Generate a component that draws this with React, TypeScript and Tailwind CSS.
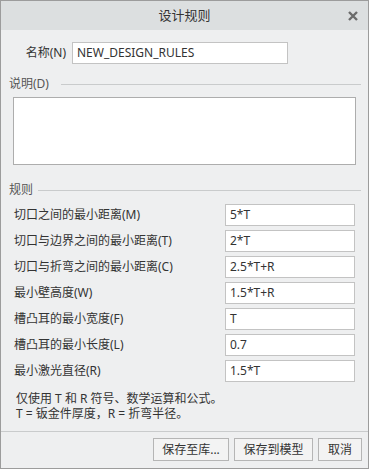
import React from 'react';

const rules = [
  { label: '切口之间的最小距离(M)', value: '5*T' },
  { label: '切口与边界之间的最小距离(T)', value: '2*T' },
  { label: '切口与折弯之间的最小距离(C)', value: '2.5*T+R' },
  { label: '最小壁高度(W)', value: '1.5*T+R' },
  { label: '槽凸耳的最小宽度(F)', value: 'T' },
  { label: '槽凸耳的最小长度(L)', value: '0.7' },
  { label: '最小激光直径(R)', value: '1.5*T' },
];

function Section({ title, lineStart }: { title: string; lineStart: string }) {
  return (
    <div className="flex items-center h-[14px] pl-[8px] pr-[7px] text-[#555]">
      <span className="leading-[14px]">{title}</span>
      <div className={`flex-1 h-px bg-[#c9cbcc] ${lineStart}`} />
    </div>
  );
}

export default function App() {
  return (
    <div className="w-[369px] h-[469px] border border-[#9c9c9c] bg-[#eeeff0] flex flex-col text-[12px] text-[#333] font-['Noto_Sans','Noto_Sans_CJK_SC',sans-serif]">
      <div className="relative h-[29px] bg-[#dcdfe0] flex items-center justify-center text-[13px] text-[#333]">
        <span>设计规则</span>
        <svg className="absolute right-[10px] top-[10px]" width="10" height="10" viewBox="0 0 10 10">
          <path d="M1 1L9 9M9 1L1 9" stroke="#6b6b6b" strokeWidth="2.4" />
        </svg>
      </div>

      <div className="flex items-center mt-[12px] pl-[19px]">
        <span className="w-[46px] text-right">名称(N)</span>
        <div className="ml-[6px] w-[216px] h-[22px] bg-white border border-[#c3c3c3] flex items-center pl-[4px]">
          NEW_DESIGN_RULES
        </div>
      </div>

      <div className="mt-[13px]">
        <Section title="说明(D)" lineStart="ml-[12px]" />
      </div>
      <div className="mt-[6px] ml-[12px] w-[343px] h-[68px] bg-white border border-[#adadad]" />

      <div className="mt-[18px]">
        <Section title="规则" lineStart="ml-[5px]" />
      </div>

      <div className="mt-[7px] flex flex-col gap-[4px]">
        {rules.map((r) => (
          <div key={r.label} className="flex items-center h-[22px] pl-[13px]">
            <span className="w-[211px]">{r.label}</span>
            <div className="w-[130px] h-[22px] bg-white border border-[#c3c3c3] flex items-center pl-[4px]">
              {r.value}
            </div>
          </div>
        ))}
      </div>

      <p className="mt-[9px] h-[30px] pl-[15px] leading-[15px] text-[#333]">
        仅使用 T 和 R 符号、数学运算和公式。
        <br />
        T = 钣金件厚度，R = 折弯半径。
      </p>

      <div className="mt-[10px] h-px bg-[#c9cbcc]" />

      <div className="mt-[6px] flex justify-end gap-[5px] pr-[6px]">
        <button className="w-[76px] h-[23px] bg-[#f3f3f3] border border-[#b5b5b5] text-[12px] text-[#333]">保存至库...</button>
        <button className="w-[79px] h-[23px] bg-[#f3f3f3] border border-[#b5b5b5] text-[12px] text-[#333]">保存到模型</button>
        <button className="w-[44px] h-[23px] bg-[#f3f3f3] border border-[#b5b5b5] text-[12px] text-[#333]">取消</button>
      </div>
    </div>
  );
}
